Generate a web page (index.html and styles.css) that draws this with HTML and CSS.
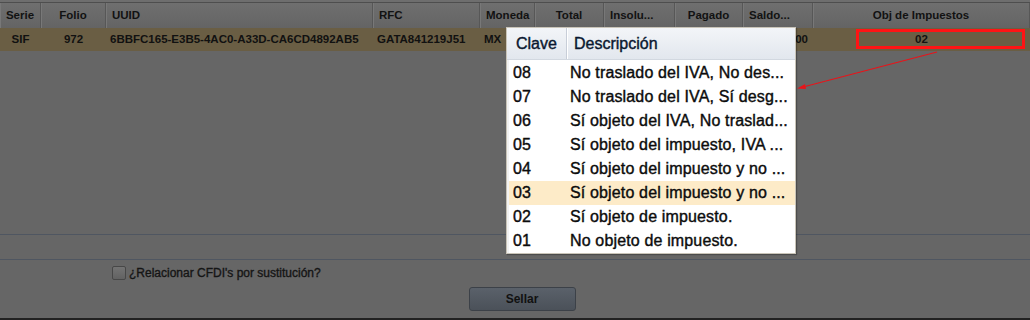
FILE: index.html
```html
<!DOCTYPE html>
<html lang="es">
<head>
    <meta charset="UTF-8">
    <meta name="viewport" content="width=device-width, initial-scale=1.0">
    <title>Sellar CFDI</title>
    <link rel="stylesheet" href="styles.css">
</head>
<body>
    <div class="window">
        <div class="top-strip"></div>

        <!-- Grid header -->
        <div class="grid-head">
            <div class="th center">Serie</div>
            <div class="th center">Folio</div>
            <div class="th">UUID</div>
            <div class="th">RFC</div>
            <div class="th">Moneda</div>
            <div class="th center">Total</div>
            <div class="th">Insolu...</div>
            <div class="th center">Pagado</div>
            <div class="th">Saldo...</div>
            <div class="th center">Obj de Impuestos</div>
        </div>

        <!-- Selected row (Total / Insoluto / Pagado sit under the popup) -->
        <div class="grid-row selected">
            <div class="td center">SIF</div>
            <div class="td center">972</div>
            <div class="td">6BBFC165-E3B5-4AC0-A33D-CA6CD4892AB5</div>
            <div class="td">GATA841219J51</div>
            <div class="td">MX</div>
            <div class="td right"></div>
            <div class="td right"></div>
            <div class="td right"></div>
            <div class="td right">0.00</div>
            <div class="td center obj">
                02
                <div class="mark"></div>
            </div>
        </div>

        <div class="grid-body"></div>
        <div class="summary-strip"></div>

        <div class="options">
            <label class="check"><span class="box"></span>¿Relacionar CFDI's por sustitución?</label>
        </div>

        <div class="actions">
            <button class="button">Sellar</button>
        </div>
    </div>

    <!-- Combo popup for Obj de Impuestos -->
    <div class="combo-popup">
        <div class="popup-head">
            <div class="ph clave">Clave</div>
            <div class="ph">Descripción</div>
        </div>
        <div class="popup-rows">
            <div class="prow"><span class="clave">08</span><span class="desc">No traslado del IVA, No des...</span></div>
            <div class="prow"><span class="clave">07</span><span class="desc">No traslado del IVA, Sí desg...</span></div>
            <div class="prow"><span class="clave">06</span><span class="desc">Sí objeto del IVA, No traslad...</span></div>
            <div class="prow"><span class="clave">05</span><span class="desc">Sí objeto del impuesto, IVA ...</span></div>
            <div class="prow"><span class="clave">04</span><span class="desc">Sí objeto del impuesto y no ...</span></div>
            <div class="prow hover"><span class="clave">03</span><span class="desc">Sí objeto del impuesto y no ...</span></div>
            <div class="prow"><span class="clave">02</span><span class="desc">Sí objeto de impuesto.</span></div>
            <div class="prow"><span class="clave">01</span><span class="desc">No objeto de impuesto.</span></div>
        </div>
    </div>

    <!-- Annotation arrow -->
    <svg class="arrow" width="1030" height="320" viewBox="0 0 1030 320">
        <line x1="937" y1="52" x2="803" y2="87" stroke="#e8141a" stroke-width="1.2"/>
        <polygon points="797,88.5 805,84 806,89" fill="#e8141a"/>
    </svg>
</body>
</html>
```

FILE: styles.css
```css
body {
    margin: 0;
    padding: 0;
    font-family: "Liberation Sans", Arial, sans-serif;
    background-color: #666666;
    color: #111;
    width: 1030px;
    height: 320px;
    overflow: hidden;
    position: relative;
}

.window {
    display: flex;
    flex-direction: column;
    height: 320px;
}

.top-strip {
    height: 2px;
    background-color: #6e6e6e;
    border-bottom: 1px solid #4e4e4e;
}

/* grid */
.grid-head,
.grid-row {
    display: grid;
    grid-template-columns: 41px 65px 267px 107px 55px 69px 71px 68px 70px 1fr;
}

.grid-head {
    height: 25px;
    background: linear-gradient(#6f6f6f, #646464);
}

.th {
    font-size: 11.5px;
    font-weight: bold;
    line-height: 25px;
    padding-left: 6px;
    border-right: 1px solid #575757;
    box-shadow: inset 1px 0 0 #787878;
    white-space: nowrap;
    overflow: hidden;
    color: #121212;
}

.th.center {
    text-align: center;
    padding-left: 0;
}

.grid-row {
    height: 23px;
}

.grid-row.selected {
    background-color: #6a5e44;
}

.td {
    font-size: 11.5px;
    font-weight: bold;
    line-height: 23px;
    padding-left: 4px;
    white-space: nowrap;
    overflow: hidden;
}

.td.center {
    text-align: center;
    padding-left: 0;
}

.td.right {
    text-align: right;
    padding-right: 5px;
}

.td.obj {
    position: relative;
    overflow: visible;
}

.mark {
    position: absolute;
    left: 43px;
    top: 1px;
    width: 169px;
    height: 20px;
    border: 3px solid #ff1414;
    box-sizing: border-box;
}

.grid-body {
    height: 183px;
}

.summary-strip {
    height: 24px;
    border-top: 1px solid #4f5661;
    border-bottom: 1px solid #4f5661;
}

.options {
    height: 25px;
    display: flex;
    align-items: center;
    padding-left: 112px;
}

.check {
    display: flex;
    align-items: center;
    gap: 3px;
    font-size: 12px;
    color: #151515;
    -webkit-text-stroke: 0.35px #151515;
}

.box {
    width: 12px;
    height: 12px;
    border: 1px solid #474747;
    border-radius: 2px;
    background: linear-gradient(#737373, #626262);
}

.actions {
    display: flex;
    justify-content: center;
    align-items: flex-start;
    padding-left: 14px;
    border-bottom: 2px solid #222;
    box-sizing: border-box;
    height: 35px;
}

.button {
    margin-top: 2px;
    width: 107px;
    height: 24px;
    background: linear-gradient(#5a616a, #4b5159);
    border: 1px solid #3c4148;
    border-radius: 3px;
    font-family: "Liberation Sans", Arial, sans-serif;
    font-size: 12px;
    font-weight: bold;
    color: #111;
}

/* popup */
.combo-popup {
    position: absolute;
    left: 506px;
    top: 27px;
    width: 288px;
    background-color: #ffffff;
    border: 1px solid #c9c4b8;
    box-shadow: 1px 1px 1px rgba(0, 0, 0, 0.25);
}

.popup-head {
    display: flex;
    height: 31px;
    background: linear-gradient(#f3f5f8, #e2e7ee);
    border-bottom: 1px solid #d2d8e0;
}

.ph {
    font-size: 16px;
    line-height: 31px;
    color: #0a1830;
    padding-left: 7px;
    -webkit-text-stroke: 0.4px #0a1830;
}

.ph.clave {
    width: 60px;
    padding-left: 9px;
    box-sizing: border-box;
    border-right: 1px solid #c8ced8;
    box-shadow: 1px 0 0 #ffffff;
}

.popup-rows {
    padding-top: 1px;
    border-left: 2px solid #f2f2f2;
}

.prow {
    display: flex;
    height: 24px;
    line-height: 24px;
    font-size: 16px;
    color: #0c0c0c;
    -webkit-text-stroke: 0.4px #0c0c0c;
    letter-spacing: 0.15px;
}

.prow.hover {
    background-color: #fdebc8;
}

.prow .clave {
    width: 61px;
    padding-left: 4px;
    box-sizing: border-box;
}

.prow .desc {
    white-space: nowrap;
}

.arrow {
    position: absolute;
    left: 0;
    top: 0;
    pointer-events: none;
}
```
